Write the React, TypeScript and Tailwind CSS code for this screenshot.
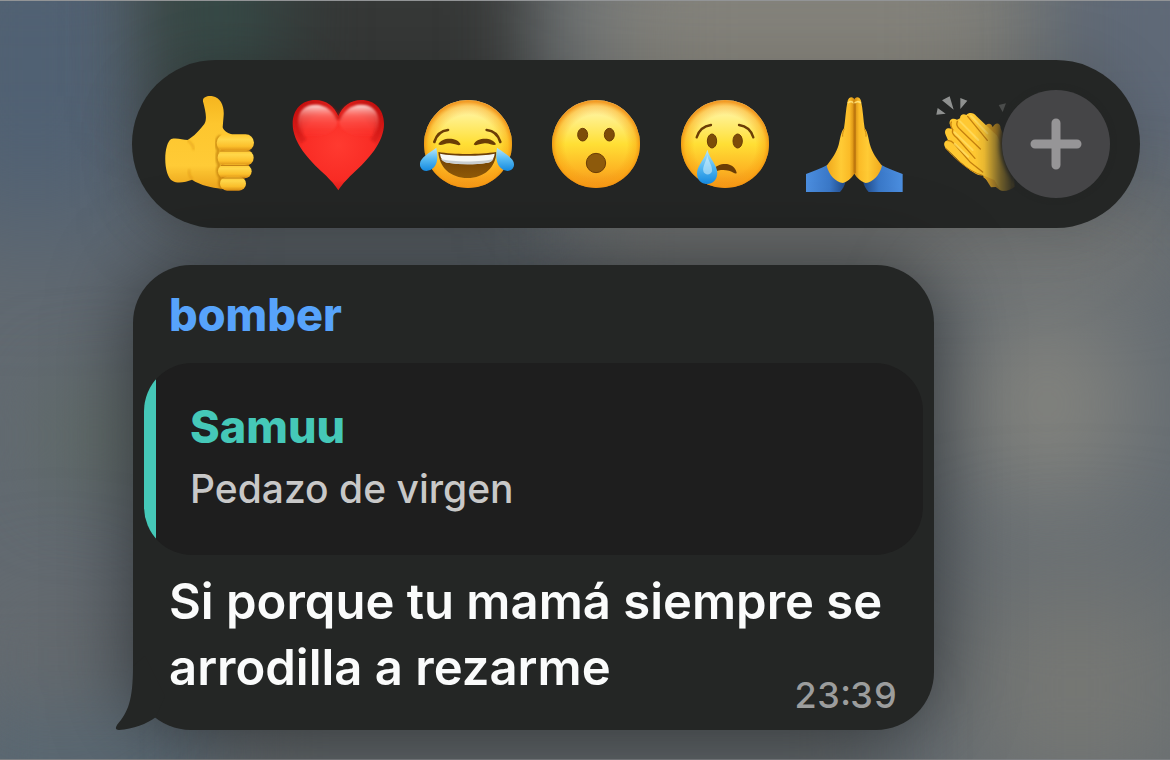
import { useState } from 'react';
import type { ReactNode } from 'react';

const ink = '#6b3d06';

function FaceBase({ id }: { id: string }) {
  return (
    <>
      <defs>
        <linearGradient id={`${id}-fill`} x1="0" y1="0" x2="0" y2="1">
          <stop offset="0" stopColor="#fff7c0" />
          <stop offset="0.2" stopColor="#fff08a" />
          <stop offset="0.5" stopColor="#ffdf35" />
          <stop offset="0.8" stopColor="#fdb423" />
          <stop offset="1" stopColor="#f3931c" />
        </linearGradient>
        <radialGradient id={`${id}-rim`} cx="0.5" cy="0.52" r="0.5">
          <stop offset="0.7" stopColor="#f69a10" stopOpacity="0" />
          <stop offset="0.9" stopColor="#f9a010" stopOpacity="0.45" />
          <stop offset="1" stopColor="#f08c0c" stopOpacity="0.85" />
        </radialGradient>
        <linearGradient id={`${id}-drop`} x1="0" y1="0" x2="0" y2="1">
          <stop offset="0" stopColor="#b9e6fa" />
          <stop offset="0.5" stopColor="#55b9f2" />
          <stop offset="1" stopColor="#168ae0" />
        </linearGradient>
        <linearGradient id={`${id}-mouth`} x1="0" y1="0" x2="0" y2="1">
          <stop offset="0" stopColor="#6a3c05" />
          <stop offset="1" stopColor="#8f5a08" />
        </linearGradient>
      </defs>
      <circle cx="180" cy="192" r="132" fill={`url(#${id}-fill)`} />
      <circle cx="180" cy="192" r="132" fill={`url(#${id}-rim)`} />
    </>
  );
}

function ThumbsUp() {
  const fingers = [
    { x: 200, y: 163, w: 112, h: 51 },
    { x: 203, y: 210, w: 108, h: 47 },
    { x: 204, y: 253, w: 101, h: 42 },
    { x: 210, y: 290, w: 78, h: 42 },
  ];
  return (
    <svg viewBox="36 48 288 288" className="size-full" aria-hidden="true">
      <defs>
        <linearGradient id="thumb-hand" x1="0" y1="0" x2="0" y2="1">
          <stop offset="0" stopColor="#f5b51f" />
          <stop offset="0.3" stopColor="#fdc62e" />
          <stop offset="0.75" stopColor="#ffcb36" />
          <stop offset="1" stopColor="#eda51c" />
        </linearGradient>
        <linearGradient id="thumb-finger" x1="0" y1="0" x2="0" y2="1">
          <stop offset="0" stopColor="#ffc72e" />
          <stop offset="0.3" stopColor="#ffd74a" />
          <stop offset="0.7" stopColor="#fcc02c" />
          <stop offset="1" stopColor="#d98b12" />
        </linearGradient>
        <filter id="thumb-soft"><feGaussianBlur stdDeviation="3" /></filter>
      </defs>
      <path d="M160 68C154 52 172 46 188 49C212 54 223 78 221 106L218 142C222 154 232 158 246 164L240 322C215 330 190 324 172 319C152 313 138 307 126 299C108 306 84 312 68 303C38 286 40 190 64 177C82 173 98 180 113 180C131 170 151 148 163 132C173 116 165 88 160 68Z" fill="url(#thumb-hand)" />
      <path d="M113 181C126 190 131 200 131 210M127 298C119 290 116 278 118 268" fill="none" stroke="#d88c10" strokeWidth="5" opacity="0.6" filter="url(#thumb-soft)" />
      <path d="M212 168C196 175 196 202 206 211C200 220 199 245 208 256C200 266 202 284 212 294C207 302 208 320 216 327" fill="none" stroke="#b06c05" strokeWidth="8" opacity="0.7" filter="url(#thumb-soft)" />
      {fingers.map(f => (
        <rect key={f.y} x={f.x} y={f.y} width={f.w} height={f.h} rx={f.h / 2} fill="url(#thumb-finger)" />
      ))}
      <path d="M212 213H300M214 256H296M216 294H284" stroke="#bc7610" strokeWidth="3" strokeLinecap="round" />
    </svg>
  );
}

function Heart() {
  return (
    <svg viewBox="33 48 288 288" className="size-full" aria-hidden="true">
      <defs>
        <radialGradient id="heart-fill" cx="0.5" cy="0.5" r="0.6">
          <stop offset="0" stopColor="#ff3a30" />
          <stop offset="0.65" stopColor="#f92c25" />
          <stop offset="1" stopColor="#c9100f" />
        </radialGradient>
        <linearGradient id="heart-shine" x1="0" y1="0" x2="0" y2="1">
          <stop offset="0" stopColor="#ffe9e6" stopOpacity="0.95" />
          <stop offset="0.35" stopColor="#ff9088" stopOpacity="0.5" />
          <stop offset="1" stopColor="#ff3a30" stopOpacity="0" />
        </linearGradient>
        <filter id="heart-soft"><feGaussianBlur stdDeviation="3" /></filter>
      </defs>
      <path d="M175 331C168 318 152 300 132 281C85 238 38 187 38 131C38 88 66 60 106 60C139 60 163 80 175 108C187 80 211 60 244 60C284 60 312 88 312 131C312 187 265 238 218 281C198 300 182 318 175 331Z" fill="url(#heart-fill)" />
      <path d="M175 119C164 90 139 73 108 73C75 73 53 93 53 128C53 151 60 168 72 184" fill="none" stroke="#b3100f" strokeWidth="20" opacity="0.35" filter="url(#heart-soft)" />
      <path d="M175 119C186 90 211 73 242 73C275 73 297 93 297 128C297 151 290 168 278 184" fill="none" stroke="#b3100f" strokeWidth="20" opacity="0.35" filter="url(#heart-soft)" />
      <g fill="url(#heart-shine)" filter="url(#heart-soft)">
        <path d="M54 125C54 92 76 74 107 74C136 74 160 93 172 122C176 160 100 180 72 172C60 158 54 143 54 125Z" />
        <path d="M296 125C296 92 274 74 243 74C214 74 190 93 178 122C174 160 250 180 278 172C290 158 296 143 296 125Z" />
      </g>
    </svg>
  );
}

function Joy() {
  return (
    <svg viewBox="36 48 288 288" className="size-full" aria-hidden="true">
      <FaceBase id="joy" />
      <g fill="none" stroke={ink} strokeLinecap="round" strokeWidth="8">
        <path d="M79 186C85 166 100 152 120 150" />
        <path d="M236 150C256 152 271 166 277 186" />
      </g>
      <path d="M91 193C100 172 146 170 158 193C151 200 143 191 126 190C109 189 99 200 91 193Z" fill={ink} />
      <path d="M197 193C209 170 255 172 264 193C257 200 247 189 230 190C213 191 204 200 197 193Z" fill={ink} />
      <path d="M91 216C135 224 217 224 265 216C264 262 228 294 179 294C128 294 93 262 91 216Z" fill="url(#joy-mouth)" />
      <path d="M96 221C138 229 220 229 260 221C258 237 250 247 239 248C198 254 159 254 119 248C105 246 98 236 96 221Z" fill="#f7f8f5" />
      <path d="M99 236C130 247 225 247 257 236C253 243 247 247 239 248C198 254 159 254 119 248C109 246 102 242 99 236Z" fill="#c9ced0" />
      <path d="M85 203C88 222 92 246 78 262C64 277 43 276 37 260C30 238 55 224 85 203Z" fill="url(#joy-drop)" />
      <path d="M267 203C264 222 262 246 276 262C290 277 311 276 317 260C324 238 297 224 267 203Z" fill="url(#joy-drop)" />
    </svg>
  );
}

function Surprised() {
  return (
    <svg viewBox="39 48 288 288" className="size-full" aria-hidden="true">
      <FaceBase id="wow" />
      <g fill="#7d4c08" stroke={ink} strokeWidth="3">
        <ellipse cx="140" cy="164" rx="15" ry="19" />
        <ellipse cx="220" cy="164" rx="15" ry="19" />
        <ellipse cx="180" cy="249" rx="29" ry="29" fill="#8d5a0c" />
      </g>
    </svg>
  );
}

function Crying() {
  return (
    <svg viewBox="39 48 288 288" className="size-full" aria-hidden="true">
      <FaceBase id="cry" />
      <g fill="#7d4c08" stroke={ink} strokeWidth="3">
        <ellipse cx="141" cy="183" rx="14" ry="21" />
        <ellipse cx="218" cy="183" rx="14" ry="21" />
      </g>
      <path d="M95 172C101 152 117 138 138 135M222 135C243 138 259 152 265 172" fill="none" stroke={ink} strokeWidth="7" strokeLinecap="round" />
      <path d="M145 268C160 247 207 243 215 278C213 286 204 274 192 272C175 269 160 270 150 276Z" fill={ink} />
      <path d="M127 209C134 236 158 257 157 280C156 300 144 312 126 312C108 312 96 300 96 280C96 257 120 236 127 209Z" fill="url(#cry-drop)" />
      <path d="M127 226C130 245 143 257 141 274C138 286 119 287 115 274C112 260 123 246 127 226Z" fill="#d9f3fc" opacity="0.55" />
    </svg>
  );
}

function Pray() {
  return (
    <svg viewBox="39 48 288 288" className="size-full overflow-visible" aria-hidden="true">
      <defs>
        <linearGradient id="pray-left" x1="0" y1="0" x2="1" y2="0">
          <stop offset="0" stopColor="#f0a81c" />
          <stop offset="0.5" stopColor="#ffcb35" />
          <stop offset="0.8" stopColor="#fbbb27" />
          <stop offset="1" stopColor="#c9800d" />
        </linearGradient>
        <linearGradient id="pray-sleeve" x1="0" y1="0" x2="1" y2="0">
          <stop offset="0" stopColor="#4c8fe0" />
          <stop offset="0.6" stopColor="#3a78c8" />
          <stop offset="1" stopColor="#1f4682" />
        </linearGradient>
        <g id="pray-half">
          <path d="M36 282C60 272 83 264 101 254C112 277 131 296 155 304C152 318 146 328 138 336H36Z" fill="url(#pray-sleeve)" />
          <path d="M182 60C178 48 165 49 161 62C155 90 154 120 150 145C141 155 139 175 134 194C128 216 113 238 98 257C104 284 125 306 147 309C163 303 178 290 184 275V62Z" fill="url(#pray-left)" />
          <path d="M163 68C168 64 176 64 179 69" fill="none" stroke="#ffdf72" strokeWidth="5" strokeLinecap="round" />
          <path d="M151 146C148 153 145 160 146 170" fill="none" stroke="#cf880f" strokeWidth="3" />
        </g>
      </defs>
      <use href="#pray-half" />
      <use href="#pray-half" transform="matrix(-1 0 0 1 362 0)" />
      <path d="M183 70V278" stroke="#a9650a" strokeWidth="3" strokeLinecap="round" />
    </svg>
  );
}

function Clap() {
  return (
    <svg viewBox="48 48 288 288" className="size-full" aria-hidden="true">
      <defs>
        <linearGradient id="clap-fade" gradientUnits="userSpaceOnUse" x1="165" y1="0" x2="275" y2="0">
          <stop offset="0" stopColor="#fff" />
          <stop offset="0.25" stopColor="#fff" stopOpacity="0.9" />
          <stop offset="0.7" stopColor="#fff" stopOpacity="0.35" />
          <stop offset="1" stopColor="#fff" stopOpacity="0.1" />
        </linearGradient>
        <mask id="clap-mask" maskUnits="userSpaceOnUse" x="40" y="40" width="300" height="300">
          <rect x="40" y="40" width="300" height="300" fill="url(#clap-fade)" />
        </mask>
      </defs>
      <path d="M66 61L89 49L101 89ZM121 54L142 62L121 87ZM53 84L77 101L49 104Z" fill="#9b9d9c" opacity="0.9" />
      <path d="M236 75L258 70L248 96Z" fill="#4a4c4b" />
      <g mask="url(#clap-mask)">
        <path d="M192 145C200 125 216 129 218 142C226 124 242 128 242 145L280 240L284 320C265 335 247 334 238 329L190 292Z" fill="#eda91d" />
        <path d="M190 285L213 322L240 320L230 285Z" fill="#eeae25" />
        <path d="M120 115C120 102 132 101 139 105C147 96 162 98 169 108L230 166C246 190 247 235 281 314C268 333 249 336 240 329L223 300L188 286C162 288 126 250 76 203C68 190 75 182 84 181L76 162C72 146 84 141 96 147L89 132C87 118 98 113 111 119Z" fill="#ffc832" />
        <g fill="none" stroke="#c5800e" strokeWidth="4" strokeLinecap="round">
          <path d="M98 149C92 140 91 133 94 126M143 109L202 181" />
          <path d="M112 124C108 134 114 144 122 150L181 207" />
          <path d="M98 149C95 158 103 168 111 174L165 235" />
          <path d="M84 182C89 181 97 185 102 191L151 247L188 276" />
          <path d="M77 205C98 228 145 275 187 286" strokeWidth="3" />
        </g>
        <g fill="none" stroke="#ffdc62" strokeWidth="6" strokeLinecap="round" opacity="0.8">
          <path d="M153 108L202 160M120 124L175 180M103 157L158 210M104 191L145 230" />
        </g>
      </g>
    </svg>
  );
}

const reactions: { label: string; icon: ReactNode }[] = [
  { label: 'Me gusta', icon: <ThumbsUp /> },
  { label: 'Corazón', icon: <Heart /> },
  { label: 'Risa', icon: <Joy /> },
  { label: 'Asombro', icon: <Surprised /> },
  { label: 'Tristeza', icon: <Crying /> },
  { label: 'Gracias', icon: <Pray /> },
  { label: 'Aplauso', icon: <Clap /> },
];

// blurred chat wallpaper behind the message
function Backdrop() {
  return (
    <div className="absolute inset-0 overflow-hidden bg-[#626a71]" aria-hidden="true">
      <div className="absolute -left-20 -top-24 h-80 w-56 bg-[#4f6073] blur-3xl" />
      <div className="absolute -top-20 left-[14%] h-72 w-[32%] bg-[#363837] blur-2xl" />
      <div className="absolute -top-20 left-[13%] h-44 w-[11%] bg-[#374a47] blur-2xl" />
      <div className="absolute -top-24 left-[50%] h-72 w-[38%] bg-[#85837b] blur-3xl" />
      <div className="absolute -right-16 -top-20 h-60 w-40 bg-[#5f6977] blur-2xl" />
      <div className="absolute left-[50%] top-52 h-16 w-[50%] bg-[#747573] blur-2xl" />
      <div className="absolute left-[83%] top-[300px] h-52 w-[13%] rounded-full bg-[#8d8b82] blur-3xl" />
      <div className="absolute -bottom-10 left-[82%] h-56 w-[20%] bg-[#777874] blur-3xl" />
      <div className="absolute left-[4%] top-[380px] h-28 w-24 bg-[#606b68] blur-2xl" />
      <div className="absolute -bottom-16 -left-10 h-32 w-64 bg-[#586772] blur-2xl" />
      <div className="absolute bottom-16 left-0 h-20 w-28 bg-[#6a6b6b] blur-3xl" />
      <div className="absolute -bottom-10 left-[20%] h-24 w-[55%] bg-[#5c6163] blur-2xl" />
      <div className="absolute inset-x-0 top-0 h-px bg-[#929496]" />
      <div className="absolute inset-x-0 bottom-0 h-px bg-[#7c7f82]" />
    </div>
  );
}

export default function App() {
  const [picked, setPicked] = useState<string | null>(null);

  return (
    <main className="relative min-h-screen font-['Inter','Liberation_Sans',sans-serif]">
      <Backdrop />

      <div className="relative flex flex-col gap-[37px] pb-[30px] pl-[132px] pr-[30px] pt-[60px]">
        <div className="relative flex h-[168px] items-center gap-[33px] overflow-hidden rounded-full bg-[#242625] pl-[30px] shadow-[0_0_60px_rgba(0,0,0,0.15)]">
          {reactions.map(r => (
            <button key={r.label} type="button" aria-label={r.label} aria-pressed={picked === r.label}
              className="size-24 shrink-0 cursor-pointer"
              onClick={() => setPicked(picked === r.label ? null : r.label)}
            >{r.icon}</button>
          ))}
          <button type="button" aria-label="Más reacciones"
            className="absolute right-[30px] flex size-[108px] cursor-pointer items-center justify-center rounded-full bg-[#454547] shadow-[0_0_4px_2px_#242625]">
            <svg viewBox="0 0 52 52" className="size-[52px]" fill="none" stroke="#969597" strokeWidth="9" strokeLinecap="round" aria-hidden="true">
              <path d="M26 5v42M5 26h42" />
            </svg>
          </button>
        </div>

        <article className="relative ml-px w-[801px] max-w-full rounded-[58px] bg-[#242625] px-[11px] pb-[29px] pt-[22px] shadow-[0_0_80px_rgba(0,0,0,0.5)]">
          <svg viewBox="0 0 54 94" className="absolute -left-[18px] bottom-0 h-[94px] w-[54px]" fill="#242625" aria-hidden="true">
            <path d="M18 30C18 65 13 76 2 89Q-1 94 4 94C18 93 32 88 41 81L50 60L30 20Z" />
          </svg>

          <h2 className="px-[25px] text-[45px] font-extrabold leading-[56px] text-[#57a3fb]">bomber</h2>

          <blockquote className="mt-5 flex h-48 overflow-hidden rounded-[48px] bg-[#1e1e1e]">
            <div className="w-3 shrink-0 bg-[#45c8b8]" />
            <div className="px-[34px] pt-9">
              <h3 className="text-[45px] font-extrabold leading-[56px] text-[#45c8b8]">Samuu</h3>
              <p className="mt-2 text-[39px] font-medium leading-[52px] text-[#c8c8c8]">Pedazo de virgen</p>
            </div>
          </blockquote>

          <p className="mt-[14px] px-[25px] text-[49px] font-semibold leading-[66px] text-[#fafbfb]">
            Si porque tu mamá siempre se arrodilla a rezarme
          </p>
          <time className="absolute bottom-3 right-[37px] text-[36px] font-medium tabular-nums leading-[46px] text-[#9c9d9d]">23:39</time>
        </article>
      </div>
    </main>
  );
}
